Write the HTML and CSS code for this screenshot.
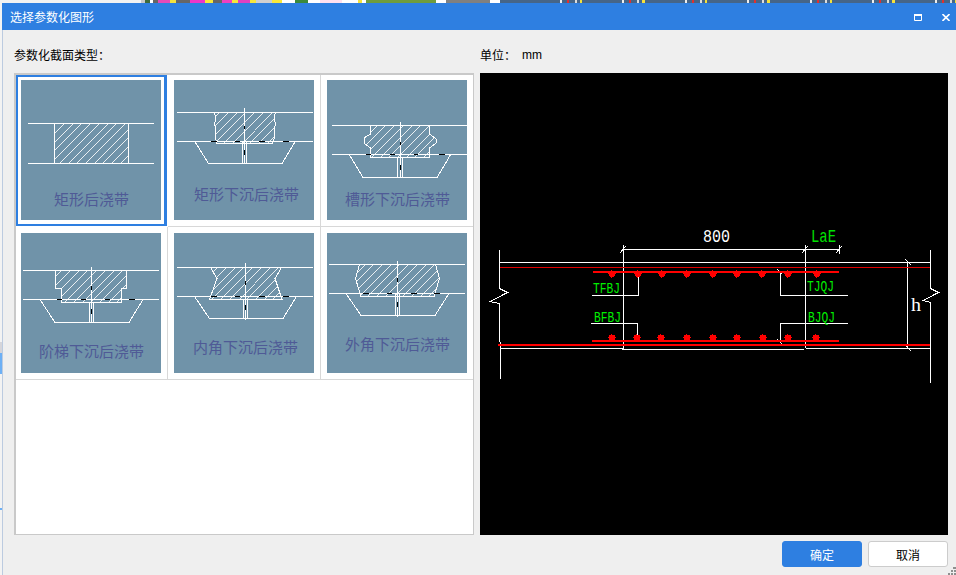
FILE: index.html
```html
<!DOCTYPE html>
<html lang="zh-CN">
<head>
<meta charset="utf-8">
<title>选择参数化图形</title>
<link rel="stylesheet" href="styles.css">
</head>
<body>
<div class="backdrop-top"><div class="strip-a"></div><div class="strip-b"></div></div>
<div class="screen">
  <div class="backdrop-left">
    <i class="bl a"></i><i class="bl b"></i><i class="bl c"></i><i class="bl d"></i><i class="bl e"></i><i class="bl f"></i>
  </div>
  <div class="dialog">
    <header class="titlebar">
      <span class="title">选择参数化图形</span>
      <span class="win-icons">
        <svg class="win-icon" width="8" height="7" viewBox="0 0 8 7"><path d="M.5 .5h7v6h-7z" fill="none" stroke="#fff"/><path d="M0 0h8v2H0z" fill="#fff"/></svg>
        <svg class="win-icon" width="8" height="7" viewBox="0 0 8 7"><path d="M.5 0l7 7M7.500 0l-7 7" fill="none" stroke="#fff" stroke-width="1.600"/></svg>
      </span>
    </header>
    <div class="body">
      <section class="left">
        <div class="label">参数化截面类型：</div>
        <div class="gallery">
          <div class="cell selected"><svg class="tile" viewBox="0 0 140 140">
            <defs>
              <path id="hl" class="hl" d="M0 8.700L8.700 0M0 17.400L17.400 0M0 26.100L26.100 0M0 34.800L34.800 0M0 43.500L43.500 0M0 52.200L52.200 0M0 60.900L60.900 0M0 69.600L69.600 0M0 78.300L78.300 0M0 87L87 0M0 95.700L95.700 0M0 104.400L104.400 0M0 113.100L113.100 0M0 121.800L121.800 0M0 130.500L130.500 0M0 139.200L139.200 0M0 147.900L147.900 0M0 156.600L156.600 0M0 165.300L165.300 0M0 174L174 0M0 182.700L182.700 0M0 191.400L191.400 0M0 200.100L200.100 0M0 208.800L208.800 0M0 217.500L217.500 0M0 226.200L226.200 0M0 234.900L234.900 0M0 243.600L243.600 0"/>
              <clipPath id="c1"><path d="M33.500 43H107.500V83H33.500Z"/></clipPath>
            </defs>
            <use href="#hl" clip-path="url(#c1)"/>
            <path class="ln" d="M33.500 43.500V83.500M107.500 43.500V83.500"/>
            <path class="ln" d="M7 43.500H133M7 83.500H133"/>
            <text class="cap" x="70.500" y="125">矩形后浇带</text>
          </svg></div>
          <div class="cell"><svg class="tile" viewBox="0 0 140 140">
            <defs><clipPath id="c2"><path d="M40 32H101.500L100 38L101.500 44L100 50L101 56L98.500 63.500H43L41 56L42 50L40.500 44L42 38Z"/></clipPath></defs>
            <use href="#hl" clip-path="url(#c2)"/>
            <path class="ln" d="M40 32L42 38L40.500 44L42 50L41 56L43 63.500H98.500L101 56L100 50L101.500 44L100 38L101.500 32"/>
            <path class="ln" d="M3 32.500H139M3 61.500H139M70.500 28V83M68.500 61V83M72.500 61V83M20.500 61L34.500 83.500H108L121.500 61"/>
            <path class="blk" d="M37 61.500h6M61 61.500h5M85 61.500h6M109 61.500h6M70.500 46v3M70.500 70v5"/>
            <text class="cap" x="72.500" y="120">矩形下沉后浇带</text>
          </svg></div>
          <div class="cell"><svg class="tile" viewBox="0 0 140 140">
            <defs><clipPath id="c3"><path d="M43.500 45H102.500V54L109 59V63L102.500 68V77H43.500V68L37 63V58L43.500 54Z"/></clipPath></defs>
            <use href="#hl" clip-path="url(#c3)"/>
            <path class="ln" d="M43.500 45V54L37 58V63L43.500 68V77.500H102.500V68L109 63V59L102.500 54V45"/>
            <path class="ln" d="M5 45.500H140M5 74.500H140M73.500 42V97M70.500 77V97M75.500 77V97M22 74L36 97.500H110L124 74"/>
            <path class="blk" d="M39 74.500h5M63 74.500h5M87 74.500h4M112 74.500h6M73.500 62v3M73.500 85v5"/>
            <text class="cap" x="70.500" y="125">槽形下沉后浇带</text>
          </svg></div>
          <div class="cell"><svg class="tile" viewBox="0 0 140 140">
            <defs><clipPath id="c4"><path d="M34.500 37.500H105.500V55.500H100.500V69.500H40.500V55.500H34.500Z"/></clipPath></defs>
            <use href="#hl" clip-path="url(#c4)"/>
            <path class="ln" d="M34.500 37.500V55.500H40.500V69.500H100.500V55.500H105.500V37.500"/>
            <path class="ln" d="M2 37.500H138M2 66.500H138M70.500 34V89M68.500 69V89M72.500 69V89M19 66.500L34 89.500H108L122 66.500"/>
            <path class="blk" d="M36 66.500h5M60 66.500h5M84 66.500h5M108 66.500h6M70.500 53v4M70.500 76v5"/>
            <text class="cap" x="70.500" y="124">阶梯下沉后浇带</text>
          </svg></div>
          <div class="cell"><svg class="tile" viewBox="0 0 140 140">
            <defs><clipPath id="c5"><path d="M36.500 34.500H107.500L101 45.500L108 66H35.500L43 45.500Z"/></clipPath></defs>
            <use href="#hl" clip-path="url(#c5)"/>
            <path class="ln" d="M36.500 34.500L43 45.500L35.500 66.500H108L101 45.500L107.500 34.500"/>
            <path class="ln" d="M3 34.500H139M3 63.500H139M71.500 30V87M69.500 66V86M73.500 66V86M20.500 63.500L35.500 85.500H109L122.500 63.500"/>
            <path class="blk" d="M37 63.500h6M61 63.500h5M85 63.500h6M109 63.500h6M71.500 48v4M71.500 72v5"/>
            <text class="cap" x="71.500" y="120">内角下沉后浇带</text>
          </svg></div>
          <div class="cell"><svg class="tile" viewBox="0 0 140 140">
            <defs><clipPath id="c6"><path d="M32.500 31.500H108.500L112.500 45.500L107 63.500H34L28.500 45.500Z"/></clipPath></defs>
            <use href="#hl" clip-path="url(#c6)"/>
            <path class="ln" d="M32.500 31.500L28.500 45.500L34 63.500H107L112.500 45.500L108.500 31.500"/>
            <path class="ln" d="M2 31.500H138M2 60.500H138M70.500 28V83.500M68.500 60V83M72.500 60V83M19 60.500L34 82.500H108L122 60.500"/>
            <path class="blk" d="M36 60.500h6M60 60.500h5M84 60.500h6M107 60.500h6M70.500 45v4M70.500 69v5"/>
            <text class="cap" x="70.500" y="117">外角下沉后浇带</text>
          </svg></div>
        </div>
      </section>
      <section class="right">
        <div class="label unit"><span>单位：</span><span class="mm">mm</span></div>
        <svg class="preview" viewBox="480 73 468 462">
          <defs>
            <g id="bar"><path class="bar-body" d="M-1.500 -2.500h4l1 1v4l-1 1h-4l-1 -1v-4z"/><path class="bar-tick" d="M-3.500 .5h8M.5 -3.500v8"/></g>
          </defs>
          <path class="w" d="M499.500 262.500H930.500M500 348.500H623M622 349.500H804M806 348.500H930M623.500 245V349M805.500 245V348"/>
          <path class="w" d="M623 249.500H840M839.500 245V254M620 253L626 246M802 253L808 246M836 253L842 246"/>
          <path class="w" d="M499.500 250V288.500L507.500 292.500L490 301.500L499.500 303.500V342M500.500 342V379"/>
          <path class="w" d="M930.500 250V288.500L938.500 292.500L923 300.500L930.500 302.500V383"/>
          <path class="w" d="M907.500 262V349M905 259L911 265M905 345L911 351"/>
          <path class="w" d="M592 295.500H638.500V275M591 323.500H637.500V340M848 295.500H780.500V272M777 269L782 274M848 323.500H780.500V342M777 339L782 344"/>
          <path class="r1" d="M499.500 267.500H930"/>
          <path class="r2" d="M593 272H839M592 341H839M498 344.500H929.500"/>
          <g>
            <use href="#bar" x="611" y="273"/><use href="#bar" x="637" y="273"/><use href="#bar" x="661" y="273"/><use href="#bar" x="686" y="273"/><use href="#bar" x="712" y="273"/><use href="#bar" x="736" y="273"/><use href="#bar" x="761" y="273"/><use href="#bar" x="787" y="273"/><use href="#bar" x="816" y="273"/>
            <use href="#bar" x="611" y="337"/><use href="#bar" x="636" y="337"/><use href="#bar" x="660" y="337"/><use href="#bar" x="686" y="337"/><use href="#bar" x="712" y="337"/><use href="#bar" x="736" y="337"/><use href="#bar" x="762" y="337"/><use href="#bar" x="787" y="337"/><use href="#bar" x="815" y="337"/>
          </g>
          <text class="cad white" x="703" y="242" textLength="27" lengthAdjust="spacingAndGlyphs">800</text>
          <text class="cad green" x="811" y="241.500" textLength="25" lengthAdjust="spacingAndGlyphs">LaE</text>
          <text class="cad-h white" x="911" y="311" textLength="10" lengthAdjust="spacingAndGlyphs">h</text>
          <text class="tag" x="593" y="292.500" textLength="27" lengthAdjust="spacingAndGlyphs">TFBJ</text>
          <text class="tag" x="594" y="321.500" textLength="27" lengthAdjust="spacingAndGlyphs">BFBJ</text>
          <text class="tag" x="807" y="291" textLength="27" lengthAdjust="spacingAndGlyphs">TJQJ</text>
          <text class="tag" x="808" y="321.500" textLength="27" lengthAdjust="spacingAndGlyphs">BJQJ</text>
        </svg>
      </section>
    </div>
    <footer class="footer">
      <button class="btn primary" type="button">确定</button>
      <button class="btn" type="button">取消</button>
    </footer>
    <svg class="grip" width="8" height="8" viewBox="0 0 8 8"><path d="M5 0h3v2H5zM3 3h2v2H3zM6 3h2v2H6zM0 6h2v2H0zM3 6h2v2H3zM6 6h2v2H6z" fill="#8f8f8f"/></svg>
  </div>
</div>
</body>
</html>
```
FILE: styles.css
```css
* { box-sizing: border-box; }
html, body { margin: 0; padding: 0; }
body {
  width: 956px;
  height: 575px;
  overflow: hidden;
  background: #efefef;
  font-family: "Noto Sans CJK SC", "Liberation Sans", sans-serif;
  font-size: 12px;
  color: #000;
}
.backdrop-top { display: flex; height: 3px; }
.strip-a {
  flex: 0 0 520px;
  background: linear-gradient(90deg,
    #f2f2f2 0 141px, #c8c8c8 141px 145px, #3f6b3a 145px 150px, #fff 150px 153px, #666 153px 158px, #e64ab8 158px 170px, #f4e23c 170px 176px, #666 176px 190px,
    #ee36c8 190px 205px, #f8e83a 205px 213px, #666 213px 222px, #f040c0 222px 232px, #f5e63c 232px 238px, #e040c0 238px 250px, #f5e63c 250px 256px, #cfcfcf 256px 272px,
    #f8e83a 272px 282px, #fff 282px 295px, #3c8a3c 295px 308px, #fff 308px 320px, #ffe0ef 320px 342px, #fff 342px 358px, #f4e23c 358px 362px, #fff 362px 366px,
    #6f9c3c 366px 436px, #fff 436px 446px, #808080 446px 490px, #fff 490px 500px, #466587 500px 520px);
}
.strip-b {
  flex: 1;
  background: repeating-linear-gradient(90deg,
    #466587 0 40px, #eee 40px 42px, #466587 42px 47px, #e23030 47px 49px, #466587 49px 55px, #ddd 55px 57px, #466587 57px 60px, #f4e23c 60px 62.500px);
}
.screen { display: flex; height: 572px; }
.backdrop-left {
  flex: 0 0 2px;
  display: flex;
  flex-direction: column;
  background: #f3f3f3;
}
.bl { display: block; }
.bl.a { height: 339px; }
.bl.b { height: 11px; background: #d5d5da; }
.bl.c { height: 21px; background: #6db0f5; }
.bl.d { height: 134px; background: #f3f3f3; }
.bl.e { height: 2px; background: #6db0f5; }
.bl.f { height: 18px; }
.dialog {
  position: relative;
  flex: 1;
  min-width: 0;
  display: flex;
  flex-direction: column;
  background: #efefef;
  border-left: 1px solid #bccbe0;
}
.titlebar {
  flex: 0 0 27px;
  margin-left: -1px;
  display: flex;
  align-items: center;
  justify-content: space-between;
  padding: 0 6px 0 8px;
  background: #2e7fe1;
  color: #fff;
}
.title { line-height: 27px; font-size: 12px; }
.win-icons { display: flex; gap: 20px; padding-top: 1px; }
.win-icon { display: block; }
.body {
  flex: 1;
  display: flex;
  gap: 6px;
  padding: 0 8px 0 11px;
}
.left { flex: 0 0 460px; display: flex; flex-direction: column; }
.right { flex: 0 0 468px; display: flex; flex-direction: column; }
.label {
  height: 43px;
  padding-top: 16px;
  line-height: 18px;
  font-size: 12px;
  flex: none;
}
.unit { display: flex; gap: 6px; }
.mm { font-family: "Liberation Sans", sans-serif; font-size: 12px; }
.gallery {
  height: 462px;
  display: grid;
  grid-template-columns: 152px 153px 152px;
  grid-template-rows: 152px 153px;
  align-content: start;
  background: #fff;
  border: 1px solid #c9c9c9;
  border-width: 2px 1px 1px 2px;
}
.cell {
  padding: 5px 0 0 6px;
  border-right: 1px solid #d8d8d8;
  border-bottom: 1px solid #d8d8d8;
}
.cell:nth-child(3n) { border-right: 0; }
.cell:nth-child(3n+1) { padding-left: 5px; }
.cell:nth-child(n+4) { padding-top: 6px; }
.cell.selected {
  margin: 0 1px 1px 0;
  padding: 3px 0 0 3px;
  border: 2px solid #2e7fe1;
  border-right-width: 3px;
}
.tile { display: block; width: 140px; height: 140px; background: #7093a9; }
.hl { fill: none; stroke: #fff; stroke-width: .85; shape-rendering: crispEdges; }
.ln { fill: none; stroke: #fff; stroke-width: 1; shape-rendering: crispEdges; }
.blk { fill: none; stroke: #000; stroke-width: 1; shape-rendering: crispEdges; }
.cap {
  font-family: "Noto Sans CJK SC", sans-serif;
  font-size: 15px;
  font-weight: 400;
  fill: #4f5a96;
  text-anchor: middle;
}
.preview { display: block; width: 468px; height: 462px; background: #000; }
.w { fill: none; stroke: #fff; stroke-width: 1; shape-rendering: crispEdges; }
.r1 { fill: none; stroke: #e00000; stroke-width: 1; shape-rendering: crispEdges; }
.r2 { fill: none; stroke: #f00; stroke-width: 2; shape-rendering: crispEdges; }
.bar-body { fill: #f00; shape-rendering: crispEdges; }
.bar-tick { fill: none; stroke: #f00; stroke-width: 1; shape-rendering: crispEdges; }
.cad { font-family: "Liberation Mono", monospace; font-size: 19px; }
.cad-h { font-family: "Liberation Serif", serif; font-size: 18px; }
.white { fill: #fff; }
.green { fill: #00e000; }
.tag { font-family: "Liberation Mono", monospace; font-size: 15px; fill: #00f000; }
.footer {
  flex: 0 0 40px;
  display: flex;
  justify-content: flex-end;
  gap: 6px;
  padding: 6px 8px 0 0;
}
.btn {
  width: 80px;
  height: 26px;
  padding: 0;
  border: 1px solid #cccccc;
  border-radius: 3px;
  background: #fff;
  color: #000;
  font: 12px "Noto Sans CJK SC", sans-serif;
}
.btn.primary { background: #2e7fe1; border-color: #2e7fe1; color: #fff; }
.grip { position: absolute; right: 0; bottom: 0; }
```
